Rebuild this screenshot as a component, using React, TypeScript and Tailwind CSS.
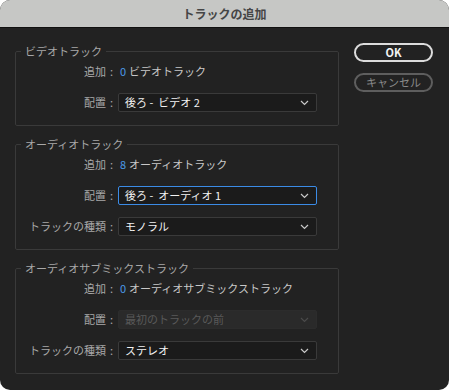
import React from "react";

const font = { fontFamily: '"Noto Sans CJK JP", "Noto Sans", sans-serif' };

function Chevron({ dim }: { dim?: boolean }) {
  return (
    <svg width="9" height="6" viewBox="0 0 9 6" className="shrink-0">
      <polyline points="1,1 4.5,4.5 8,1" fill="none" stroke={dim ? "#4a4a4a" : "#c8c8c8"} strokeWidth="1.2" />
    </svg>
  );
}

function Select({ value, focused, disabled }: { value: string; focused?: boolean; disabled?: boolean }) {
  const cls = disabled
    ? "border-[#2c2c2c] bg-[#2a2a2a] text-[#595959]"
    : focused
    ? "border-[#3b8be6] bg-[#1b1b1b] text-[#f2f2f2]"
    : "border-[#3a3a3a] bg-[#1b1b1b] text-[#f2f2f2]";
  return (
    <div className={`flex h-[19px] w-[199px] items-center justify-between rounded-[2px] border pl-[6px] pr-[7px] ${cls}`}>
      <span className="whitespace-pre text-[11px] leading-none">{value}</span>
      <Chevron dim={disabled} />
    </div>
  );
}

function Row({ label, children }: { label: string; children: React.ReactNode }) {
  return (
    <div className="flex h-[19px] items-center">
      <div className="w-[99px] shrink-0 pr-[2px] text-right text-[11px] leading-none text-[#a8a8a8]">
        {label}
        <span className="ml-[4px]">:</span>
      </div>
      <div className="ml-[3px]">{children}</div>
    </div>
  );
}

function Added({ n, text }: { n: string; text: string }) {
  return (
    <div className="flex items-center pl-[2px] text-[11px] leading-none text-[#c8c8c8]">
      <span className="mr-[3px] text-[#4b9ae8]">{n}</span>
      <span>{text}</span>
    </div>
  );
}

function Group({ title, children }: { title: string; children: React.ReactNode }) {
  return (
    <fieldset className="rounded-[2px] border border-[#3a3a3a] pt-[3px] pb-[13px]">
      <legend className="ml-[5px] px-[4px] text-[11px] leading-[16px] text-[#a8a8a8]">{title}</legend>
      <div className="flex flex-col gap-[12px]">{children}</div>
    </fieldset>
  );
}

export default function App() {
  return (
    <div className="h-[390px] w-[449px] bg-white" style={font}>
      <div className="flex h-full w-full flex-col overflow-hidden rounded-[10px] bg-[#222222]">
        <div className="flex h-[28px] shrink-0 items-center justify-center border-b border-[#111111] bg-[#c6c7c5] pt-[1px]">
          <span className="text-[12px] font-bold text-[#454545]">トラックの追加</span>
        </div>
        <div className="flex pt-[15px] pl-[15px]">
          <div className="flex w-[324px] flex-col gap-[10px]">
            <Group title="ビデオトラック">
              <Row label="追加">
                <Added n="0" text="ビデオトラック" />
              </Row>
              <Row label="配置">
                <Select value="後ろ -  ビデオ 2" />
              </Row>
            </Group>
            <Group title="オーディオトラック">
              <Row label="追加">
                <Added n="8" text="オーディオトラック" />
              </Row>
              <Row label="配置">
                <Select value="後ろ -  オーディオ 1" focused />
              </Row>
              <Row label="トラックの種類">
                <Select value="モノラル" />
              </Row>
            </Group>
            <Group title="オーディオサブミックストラック">
              <Row label="追加">
                <Added n="0" text="オーディオサブミックストラック" />
              </Row>
              <Row label="配置">
                <Select value="最初のトラックの前" disabled />
              </Row>
              <Row label="トラックの種類">
                <Select value="ステレオ" />
              </Row>
            </Group>
          </div>
          <div className="ml-[15px] flex flex-col gap-[11px]">
            <div className="flex h-[19px] w-[79px] items-center justify-center rounded-full border-2 border-[#dcdcdc] text-[11px] font-bold text-[#f2f2f2]">
              OK
            </div>
            <div className="flex h-[19px] w-[79px] items-center justify-center rounded-full border-2 border-[#5e5e5e] text-[11px] text-[#8a8a8a]">
              キャンセル
            </div>
          </div>
        </div>
      </div>
    </div>
  );
}
